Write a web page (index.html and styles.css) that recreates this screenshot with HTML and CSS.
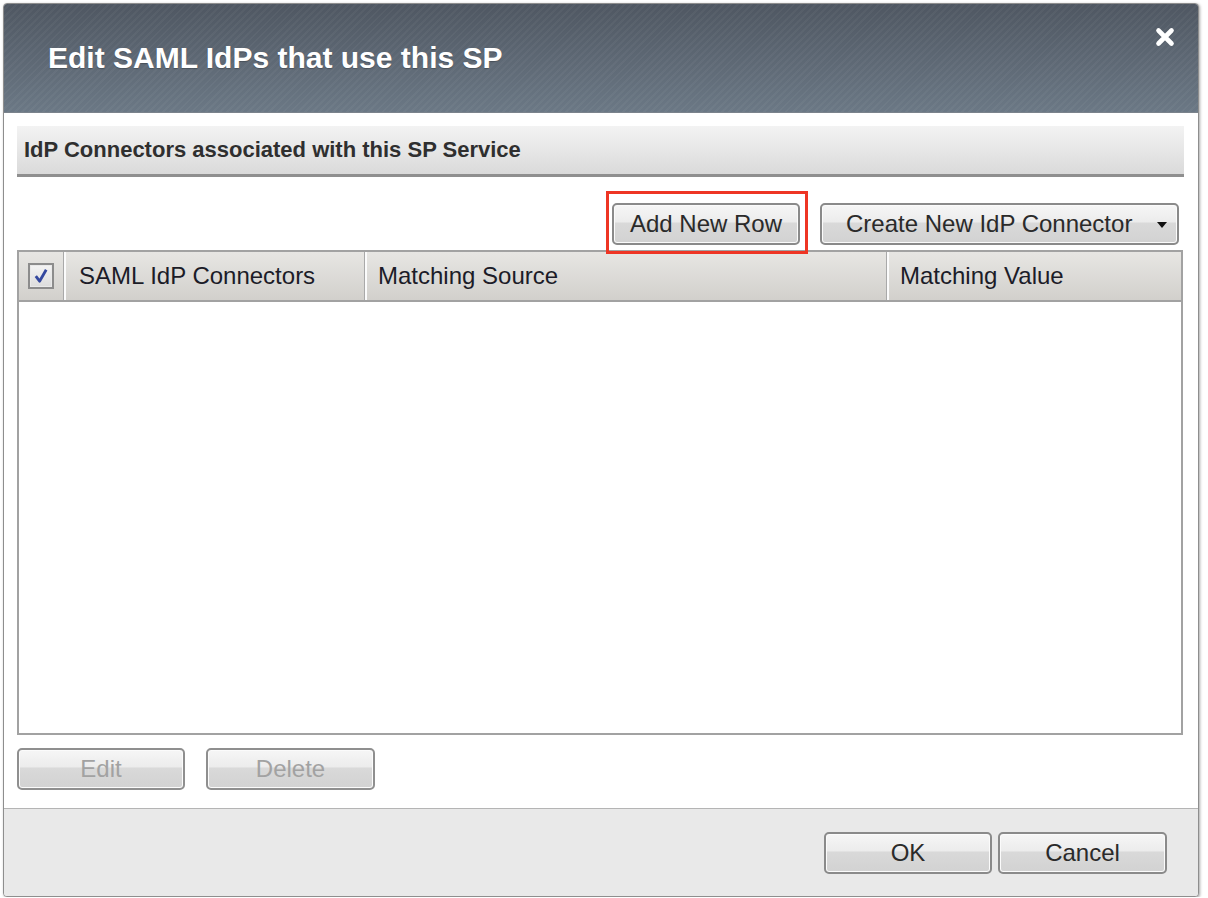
FILE: index.html
```html
<!DOCTYPE html>
<html lang="en">
<head>
<meta charset="utf-8">
<title>Edit SAML IdPs that use this SP</title>
<link rel="stylesheet" href="styles.css">
</head>
<body>
<div class="dialog">
  <div class="dlg-header">
    <h1 class="dlg-title">Edit SAML IdPs that use this SP</h1>
    <span class="dlg-close" aria-label="Close">
      <svg width="20" height="20" viewBox="0 0 20 20"><path d="M3.5 3.5 L16.5 16.5 M16.5 3.5 L3.5 16.5" stroke="#fff" stroke-width="4.6" stroke-linecap="round" fill="none"/></svg>
    </span>
  </div>
  <div class="dlg-body">
    <div class="section-bar">IdP Connectors associated with this SP Service</div>
    <div class="toolbar">
      <div class="highlight-wrap">
        <button class="btn btn-add">Add New Row</button>
        <span class="highlight"></span>
      </div>
      <button class="btn btn-split">Create New IdP Connector<span class="caret"></span></button>
    </div>
    <div class="grid">
      <div class="grid-head">
        <div class="gh gh-check">
          <span class="chk">
            <svg width="18" height="18" viewBox="0 0 18 18"><path d="M3.8 9.2 L7.6 14.2 L14.2 2.8" stroke="#34489f" stroke-width="2.8" fill="none" stroke-linejoin="round"/></svg>
          </span>
        </div>
        <div class="gh">SAML IdP Connectors</div>
        <div class="gh">Matching Source</div>
        <div class="gh gh-last">Matching Value</div>
      </div>
      <div class="grid-body"></div>
    </div>
    <div class="row-actions">
      <button class="btn btn-wide" disabled>Edit</button>
      <button class="btn btn-wide" disabled>Delete</button>
    </div>
  </div>
  <div class="dlg-footer">
    <button class="btn btn-wide">OK</button>
    <button class="btn btn-wide">Cancel</button>
  </div>
</div>
</body>
</html>
```
FILE: styles.css
```css
* { box-sizing: border-box; }

html, body {
  margin: 0;
  padding: 0;
  background: #ffffff;
}

body {
  font-family: "Liberation Sans", Arial, sans-serif;
  color: #222;
}

.dialog {
  margin: 3px 0 0 3px;
  width: 1196px;
  height: 894px;
  border: 1px solid #8e8e8e;
  border-radius: 4px;
  box-shadow: 1px 1px 3px rgba(0, 0, 0, 0.35);
  overflow: hidden;
  display: flex;
  flex-direction: column;
  background: #fff;
}

.dlg-header {
  height: 109px;
  flex: none;
  border-bottom: 1px solid #7b838c;
  background:
    repeating-linear-gradient(135deg, rgba(255,255,255,0) 0px, rgba(255,255,255,0) 3px, rgba(255,255,255,0.035) 3px, rgba(255,255,255,0.035) 5px),
    linear-gradient(#4f5762, #6b7885);
  display: flex;
  align-items: center;
  padding: 0 24px 0 44px;
  position: relative;
}

.dlg-title {
  margin: 0;
  font-size: 30px;
  font-weight: bold;
  color: #ffffff;
  text-shadow: 0 1px 1px rgba(0, 0, 0, 0.25);
}

.dlg-close {
  position: absolute;
  top: 23px;
  right: 23px;
  width: 20px;
  height: 20px;
  display: block;
}
.dlg-close svg { display: block; }

.dlg-body {
  flex: none;
  height: 696px;
  padding: 13px 14px 0 13px;
  border-bottom: 1px solid #b4b4b4;
  display: flex;
  flex-direction: column;
}

.section-bar {
  height: 51px;
  flex: none;
  background: linear-gradient(#f3f3f3, #dadada);
  border-bottom: 3px solid #8f8f8f;
  padding-left: 7px;
  display: flex;
  align-items: center;
  font-size: 22px;
  font-weight: bold;
  color: #2f2f2f;
}

.toolbar {
  margin-top: 26px;
  height: 42px;
  flex: none;
  display: flex;
  justify-content: flex-end;
  gap: 20px;
  padding-right: 5px;
}

.btn {
  font-family: "Liberation Sans", Arial, sans-serif;
  font-size: 24px;
  color: #2a2a2a;
  height: 42px;
  border: 2px solid #8a8a8a;
  border-radius: 5px;
  background: linear-gradient(#f6f6f6 0%, #ececec 44%, #d9d9d9 48%, #d2d2d2 100%);
  box-shadow: inset 0 0 0 1px #fbfbfb;
  padding: 0 16px;
  margin: 0;
  line-height: 1;
  white-space: nowrap;
  cursor: default;
}

.btn:disabled {
  color: #a2a2a2;
  border-color: #8f8f8f;
}

.highlight-wrap {
  position: relative;
  display: flex;
}

.btn-add {
  width: 188px;
  padding: 0;
}

.highlight {
  position: absolute;
  top: -12px;
  bottom: -9px;
  left: -6px;
  right: -8px;
  border: 3px solid #ee3524;
  pointer-events: none;
}

.btn-split {
  width: 359px;
  display: flex;
  align-items: center;
  justify-content: space-between;
  padding: 0 10px 0 24px;
}

.caret {
  width: 0;
  height: 0;
  border-left: 5px solid transparent;
  border-right: 5px solid transparent;
  border-top: 6px solid #111;
  margin-top: 2px;
}

.grid {
  margin-top: 5px;
  margin-right: 1px;
  height: 485px;
  flex: none;
  border: 2px solid #a2a2a2;
  display: flex;
  flex-direction: column;
}

.grid-head {
  height: 50px;
  flex: none;
  display: grid;
  grid-template-columns: 45px 301px 522px 1fr;
  background: linear-gradient(#e7e6e3, #d2d0cc);
  border-bottom: 2px solid #a2a2a2;
}

.gh {
  display: flex;
  align-items: center;
  padding-left: 11px;
  font-size: 24px;
  color: #1c1c28;
  border-left: 2px solid #fbfbfb;
  border-right: 1px solid #a9a9a9;
  white-space: nowrap;
}

.gh:nth-child(2) { padding-left: 13px; }

.gh-check {
  justify-content: center;
  padding-left: 0;
  border-left: 0;
}

.gh-last { border-right: 0; }

.chk {
  width: 26px;
  height: 26px;
  border: 2px solid #8c8c8c;
  background: linear-gradient(#f4f4f4, #dcdcdc);
  box-shadow: inset 0 0 0 1px #e9e9e9;
  display: flex;
  align-items: center;
  justify-content: center;
}
.chk svg { display: block; }

.grid-body {
  flex: 1;
  background: #fff;
}

.row-actions {
  margin-top: 13px;
  display: flex;
  gap: 21px;
  flex: none;
}

.btn-wide {
  width: 168px;
  padding: 0;
}

.row-actions .btn-wide + .btn-wide,
.dlg-footer .btn-wide + .btn-wide {
  width: 169px;
}

.dlg-footer {
  flex: 1;
  background: #e9e9e9;
  display: flex;
  justify-content: flex-end;
  align-items: flex-start;
  gap: 6px;
  padding: 23px 31px 0 0;
}
```
